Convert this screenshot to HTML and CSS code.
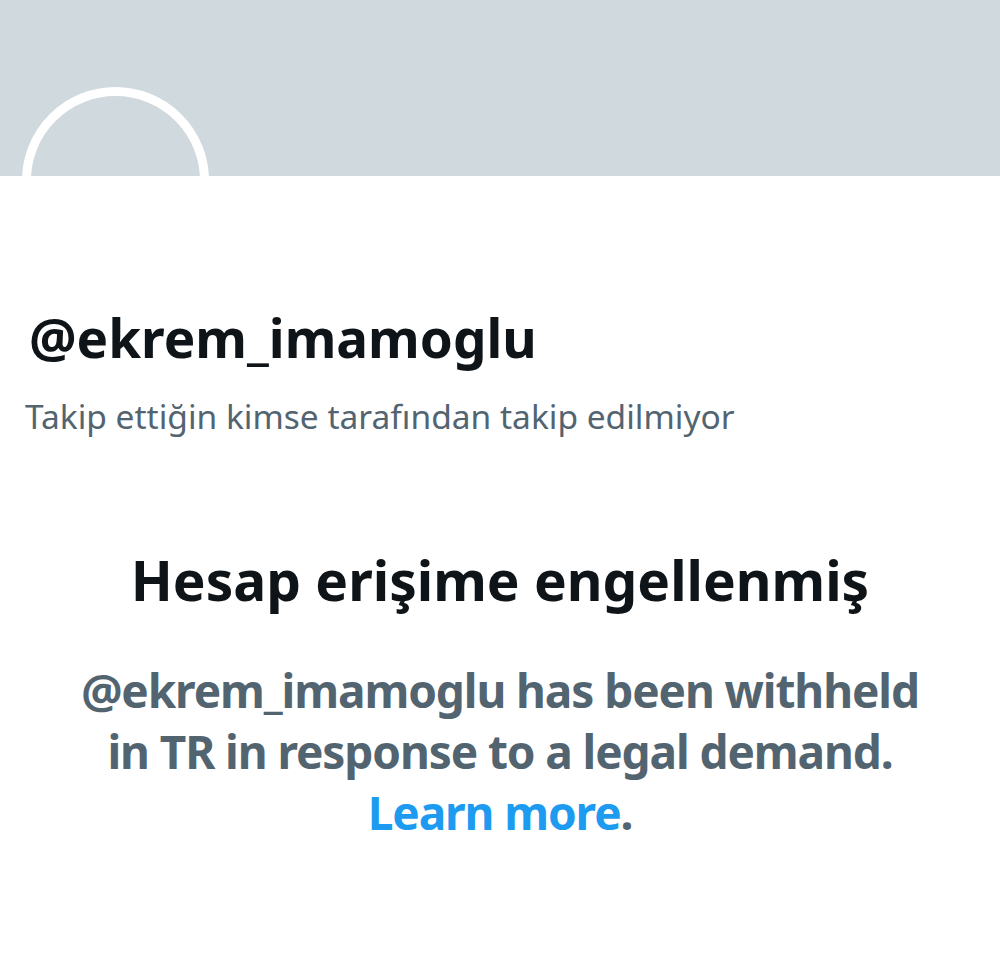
FILE: index.html
```html
<!DOCTYPE html>
<html lang="tr">
<head>
  <meta charset="UTF-8">
  <title>@ekrem_imamoglu</title>
  <meta name="viewport" content="width=device-width, initial-scale=1">
  <link rel="stylesheet" href="styles.css">
</head>
<body>
  <div class="banner">
    <div class="avatar"></div>
  </div>

  <div class="profile">
    <h1 class="handle">@ekrem_imamoglu</h1>
    <p class="follow-info">Takip ettiğin kimse tarafından takip edilmiyor</p>
  </div>

  <div class="withheld">
    <h2>Hesap erişime engellenmiş</h2>
    <p>@ekrem_imamoglu has been withheld in TR in response to a legal demand. <a href="#">Learn more</a>.</p>
  </div>
</body>
</html>
```

FILE: styles.css
```css
body {
  margin: 0;
  font-family: "Noto Sans", "Liberation Sans", sans-serif;
  background: #fff;
  color: #0f1419;
}

.banner {
  position: relative;
  height: 176px;
  background: #cfd9de;
  overflow: hidden;
}

/* avatar sits over the banner edge, only the top half shows */
.avatar {
  position: absolute;
  left: 22px;
  top: 87px;
  width: 169px;
  height: 169px;
  border: 9px solid #fff;
  border-radius: 50%;
  background: #cfd9de;
}

.profile {
  padding: 130px 0 0 29px;
}

.handle {
  margin: 0;
  font-size: 53px;
  font-weight: 700;
  line-height: 64px;
}

.follow-info {
  margin: 26px 0 0 -4px;
  font-size: 33.5px;
  line-height: 40px;
  color: #536471;
}

.withheld {
  padding: 112px 40px 0;
  text-align: center;
}

.withheld h2 {
  margin: 0;
  font-size: 55px;
  font-weight: 700;
  line-height: 64px;
}

.withheld p {
  margin: 48px auto 0;
  max-width: 850px;
  font-size: 46px;
  font-weight: 700;
  letter-spacing: -1.1px;
  line-height: 61px;
  color: #536471;
}

.withheld a {
  color: #1d9bf0;
  text-decoration: none;
}
```
